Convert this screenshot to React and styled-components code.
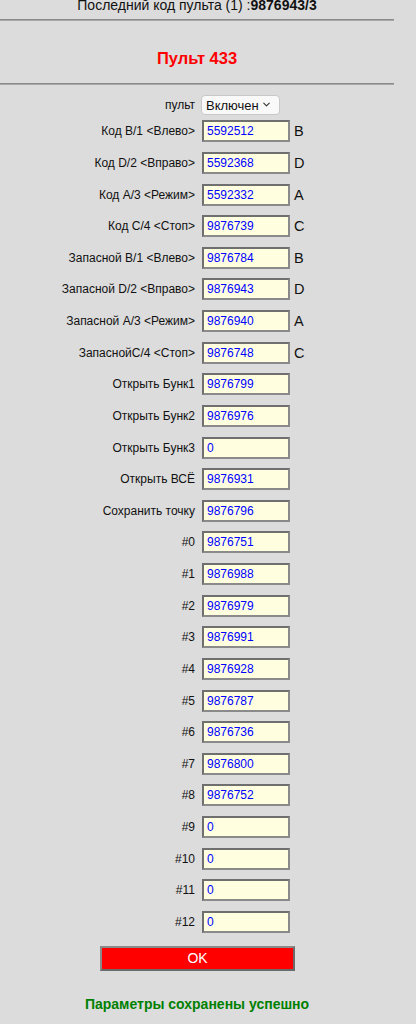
import React, { useState } from 'react';
import styled, { createGlobalStyle } from 'styled-components';
import { ChevronDown } from 'lucide-react';

const GlobalStyle = createGlobalStyle`
  html, body {
    margin: 0;
    padding: 0;
    background: #dcdcdc;
    font-family: "Liberation Sans", Arial, sans-serif;
    color: #111;
  }
`;

const rows = [
  { label: 'Код B/1 <Влево>', value: '5592512', tag: 'B' },
  { label: 'Код D/2 <Вправо>', value: '5592368', tag: 'D' },
  { label: 'Код A/3 <Режим>', value: '5592332', tag: 'A' },
  { label: 'Код C/4 <Стоп>', value: '9876739', tag: 'C' },
  { label: 'Запасной B/1 <Влево>', value: '9876784', tag: 'B' },
  { label: 'Запасной D/2 <Вправо>', value: '9876943', tag: 'D' },
  { label: 'Запасной A/3 <Режим>', value: '9876940', tag: 'A' },
  { label: 'ЗапаснойC/4 <Стоп>', value: '9876748', tag: 'C' },
  { label: 'Открыть Бунк1', value: '9876799' },
  { label: 'Открыть Бунк2', value: '9876976' },
  { label: 'Открыть Бунк3', value: '0' },
  { label: 'Открыть ВСЁ', value: '9876931' },
  { label: 'Сохранить точку', value: '9876796' },
  { label: '#0', value: '9876751' },
  { label: '#1', value: '9876988' },
  { label: '#2', value: '9876979' },
  { label: '#3', value: '9876991' },
  { label: '#4', value: '9876928' },
  { label: '#5', value: '9876787' },
  { label: '#6', value: '9876736' },
  { label: '#7', value: '9876800' },
  { label: '#8', value: '9876752' },
  { label: '#9', value: '0' },
  { label: '#10', value: '0' },
  { label: '#11', value: '0' },
  { label: '#12', value: '0' },
];

const App = () => {
  const [mode, setMode] = useState('on');

  return (
    <Page>
      <GlobalStyle />
      <LastCode>
        Последний код пульта (1) :<b>9876943/3</b>
      </LastCode>
      <Rule />
      <Title>Пульт 433</Title>
      <Rule />
      <SelectRow>
        <Label>пульт</Label>
        <Cell>
          <SelectBox>
            <Select value={mode} onChange={(e) => setMode(e.target.value)}>
              <option value="on">Включен</option>
              <option value="off">Выключен</option>
            </Select>
            <Chevron size={11} strokeWidth={2.4} />
          </SelectBox>
        </Cell>
      </SelectRow>
      <Form>
        {rows.map((row, i) => (
          <Row key={i}>
            <Label>{row.label}</Label>
            <Cell>
              <CodeInput defaultValue={row.value} />
              {row.tag && <Tag>{row.tag}</Tag>}
            </Cell>
          </Row>
        ))}
      </Form>
      <OkButton>OK</OkButton>
      <Status>Параметры сохранены успешно</Status>
    </Page>
  );
};

const Page = styled.div`
  width: 394px;
  height: 1024px;
  overflow: hidden;
  display: flex;
  flex-direction: column;
  align-items: stretch;
`;

const LastCode = styled.div`
  margin-top: -4px;
  text-align: center;
  font-size: 14px;
  line-height: 18px;
  b {
    font-weight: bold;
  }
`;

const Rule = styled.div`
  width: 416px;
  height: 0;
  border-top: 1px solid #8a8a8a;
  border-bottom: 1px solid #a8a8a8;
  margin-top: 5px;
`;

const Title = styled.div`
  text-align: center;
  color: #ff0000;
  font-weight: bold;
  font-size: 16.5px;
  line-height: 22px;
  padding: 26px 0 16px;
  margin-bottom: -7px;
`;

const SelectRow = styled.div`
  display: grid;
  grid-template-columns: 1fr 1fr;
  align-items: center;
  margin-top: 10px;
  height: 20px;
`;

const Form = styled.div`
  display: flex;
  flex-direction: column;
  margin-top: 0.5px;
`;

const Row = styled.div`
  display: grid;
  grid-template-columns: 1fr 1fr;
  align-items: center;
  height: 31.64px;
`;

const Label = styled.div`
  text-align: right;
  padding-right: 2px;
  font-size: 12px;
  color: #111;
`;

const Cell = styled.div`
  display: flex;
  align-items: center;
  padding-left: 5px;
`;

const SelectBox = styled.div`
  position: relative;
  display: inline-flex;
  margin-left: -1px;
`;

const Select = styled.select`
  appearance: none;
  width: 79px;
  height: 20px;
  font-family: "Liberation Sans", Arial, sans-serif;
  font-size: 13px;
  color: #111;
  background: #f9f9f9;
  border: 1px solid #c8c8c8;
  border-radius: 4px;
  padding: 0 0 0 4px;
  outline: none;
`;

const Chevron = styled(ChevronDown)`
  position: absolute;
  right: 8px;
  top: 4px;
  color: #333;
  pointer-events: none;
`;

const CodeInput = styled.input`
  box-sizing: border-box;
  width: 88px;
  height: 22px;
  border: 2px solid #777;
  border-color: #6f6f6f #8a8a8a #8a8a8a #6f6f6f;
  background: #ffffe0;
  color: #0000ff;
  font-family: "Liberation Sans", Arial, sans-serif;
  font-size: 12px;
  padding: 0 0 0 3px;
  outline: none;
`;

const Tag = styled.span`
  margin-left: 4px;
  font-size: 14.5px;
  color: #111;
`;

const OkButton = styled.button`
  align-self: flex-start;
  box-sizing: border-box;
  margin: 8px 0 0 100px;
  width: 195px;
  height: 25px;
  background: #ff0000;
  color: #fff;
  border: 2px solid #7d7d7d;
  border-color: #8a8a8a #6a6a6a #6a6a6a #8a8a8a;
  font-family: "Liberation Sans", Arial, sans-serif;
  font-size: 14px;
  cursor: pointer;
`;

const Status = styled.div`
  margin-top: 25px;
  text-align: center;
  color: #008000;
  font-weight: bold;
  font-size: 14px;
`;

export default App;
